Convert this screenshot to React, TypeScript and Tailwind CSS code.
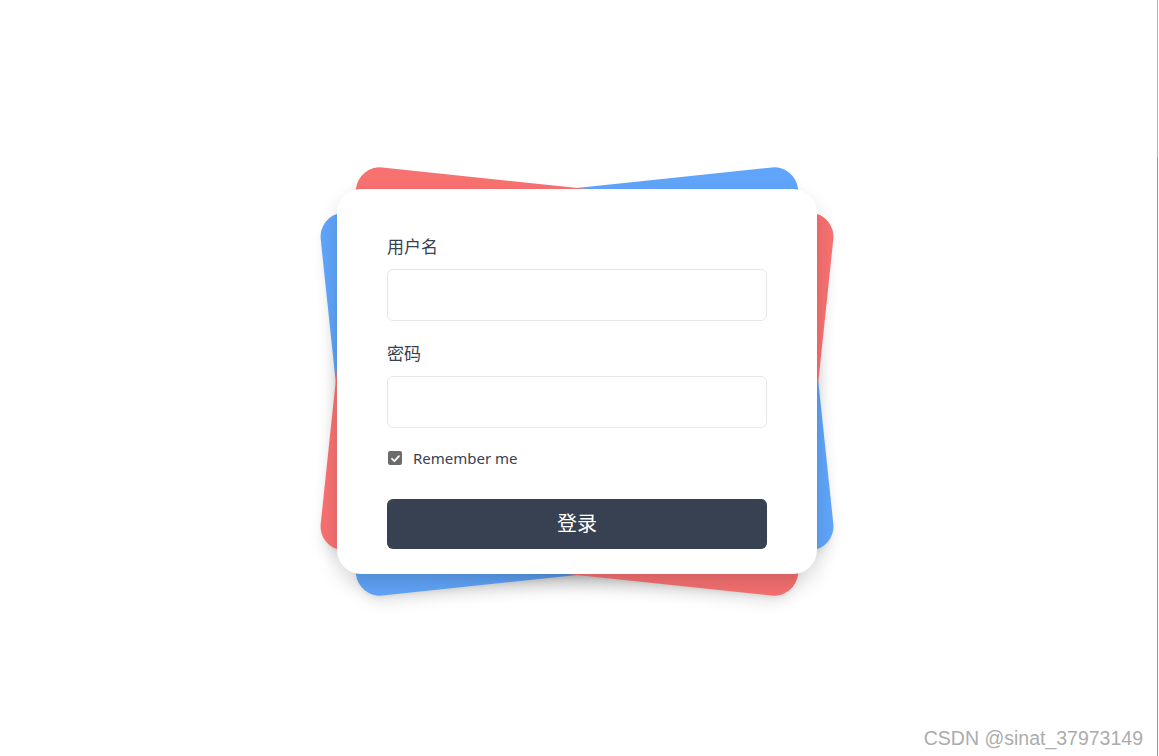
import React from "react";

export default function App() {
  return (
    <div
      className="flex h-[756px] w-[1159px] overflow-hidden bg-white"
      style={{ fontFamily: '"Noto Sans", "Noto Sans CJK SC", sans-serif' }}
    >
      <div className="relative flex flex-1 items-start justify-center pt-[189px]">
        <div className="relative w-[480px]">
          <div className="absolute inset-0 rotate-[-6deg] rounded-3xl bg-[#60a5fa] shadow-lg" />
          <div className="absolute inset-0 rotate-[6deg] rounded-3xl bg-[#f87171] shadow-lg" />
          <div className="relative flex h-[385px] flex-col rounded-3xl bg-white px-[50px] pt-[46px] shadow-[0_10px_20px_rgba(0,0,0,0.15)]">
            <label className="text-[17px] leading-[24px] text-[#374151]">用户名</label>
            <input className="mt-[10px] h-[52px] w-full rounded-md border border-[#e5e7eb] bg-white outline-none" />
            <label className="mt-[21px] text-[17px] leading-[24px] text-[#374151]">密码</label>
            <input
              type="password"
              className="mt-[10px] h-[52px] w-full rounded-md border border-[#e5e7eb] bg-white outline-none"
            />
            <div className="mt-[20px] flex h-[20px] items-center">
              <span className="ml-[1px] flex h-[14px] w-[14px] items-center justify-center rounded-[2px] bg-[#6b6b6b]">
                <svg viewBox="0 0 12 12" className="h-[11px] w-[11px]">
                  <path d="M2.2 6.3 L4.8 8.8 L9.8 3.4" fill="none" stroke="white" strokeWidth="1.9" strokeLinecap="round" strokeLinejoin="round" />
                </svg>
              </span>
              <span className="ml-[11px] text-[15px] text-[#374151]">Remember me</span>
            </div>
            <button className="mt-[31px] flex h-[50px] w-full items-center justify-center rounded-md bg-[#374151] text-[20px] text-white">
              登录
            </button>
          </div>
        </div>
        <div
          className="absolute bottom-[6px] right-[11px] text-[19.5px] leading-[24px] text-[#acacac]"
          style={{ fontFamily: '"Liberation Sans", "DejaVu Sans", sans-serif' }}
        >
          CSDN @sinat_37973149
        </div>
      </div>
      <div className="flex w-[5px] flex-col pl-[3px]">
        <div className="h-[157px] w-[1px] bg-[#b4b4b4]" />
        <div className="w-[1px] flex-1 bg-[#7b9cc2]" />
      </div>
    </div>
  );
}
